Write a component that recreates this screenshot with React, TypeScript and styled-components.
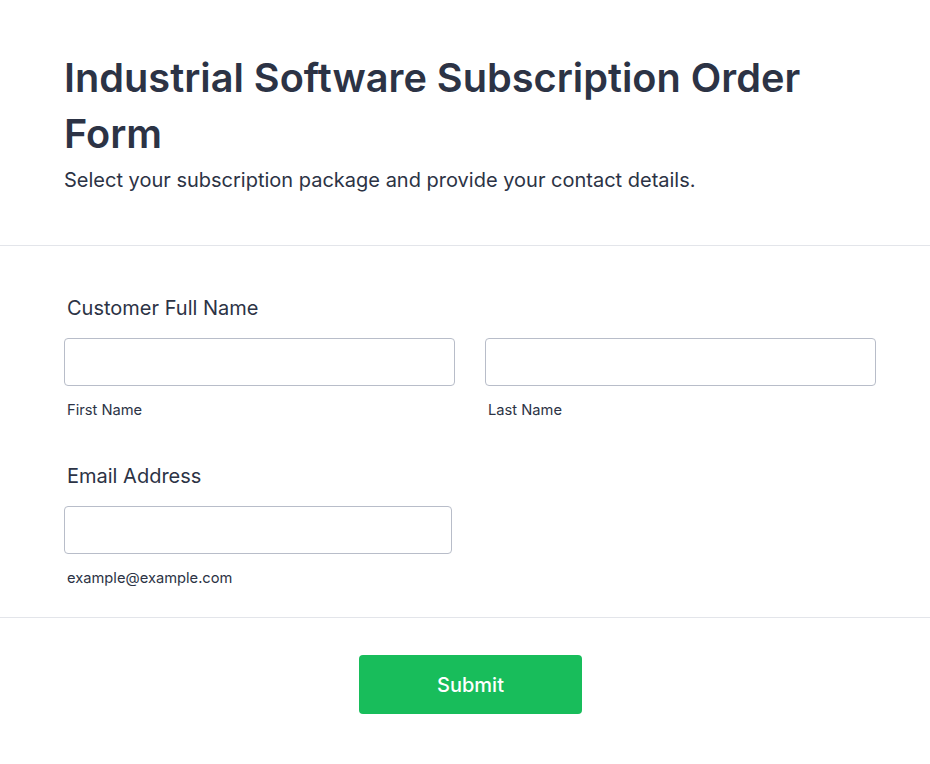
import React from "react";
import styled, { createGlobalStyle } from "styled-components";

const Global = createGlobalStyle`
  html, body { margin: 0; padding: 0; background: #fff; }
  body { font-family: Inter, "Noto Sans", sans-serif; color: #2c3345; }
  * { box-sizing: border-box; }
`;

const Page = styled.div`
  width: 930px;
  min-height: 764px;
  background: #fff;
`;

const Header = styled.header`
  padding: 50px 54px 51px 64px;
  border-bottom: 1px solid #e3e5ea;
`;

const Title = styled.h1`
  margin: 0;
  font-size: 39.7px;
  font-weight: 600;
  line-height: 56px;
  color: #2c3345;
`;

const Subtitle = styled.p`
  margin: 4px 0 0;
  font-size: 20px;
  line-height: 28px;
  color: #2c3345;
`;

const Body = styled.section`
  padding: 48px 54px 29px 64px;
  border-bottom: 1px solid #e3e5ea;
  display: flex;
  flex-direction: column;
  gap: 42px;
`;

const Field = styled.div`
  display: flex;
  flex-direction: column;
`;

const Label = styled.label`
  padding-left: 3px;
  font-size: 20px;
  font-weight: 400;
  line-height: 28px;
  margin-bottom: 16px;
`;

const Row = styled.div`
  display: grid;
  grid-template-columns: 391px 391px;
  column-gap: 30px;
`;

const Col = styled.div<{ $width?: number }>`
  display: flex;
  flex-direction: column;
  width: ${(p) => (p.$width ? `${p.$width}px` : "auto")};
`;

const Input = styled.input`
  height: 48px;
  width: 100%;
  border: 1px solid #b8bdc9;
  border-radius: 4px;
  background: #fff;
  padding: 0 12px;
  font-family: inherit;
  font-size: 16px;
  outline: none;
`;

const Sub = styled.span`
  padding-left: 3px;
  margin-top: 14px;
  font-size: 14.7px;
  line-height: 20px;
  color: #2c3345;
`;

const Footer = styled.div`
  display: flex;
  justify-content: center;
  padding: 37px 0 40px;
`;

const SubmitButton = styled.button`
  width: 223px;
  height: 59px;
  border: none;
  border-radius: 4px;
  background: #18bd5b;
  color: #fff;
  font-family: inherit;
  font-size: 20px;
  font-weight: 500;
  margin-left: 11px;
  cursor: pointer;
`;

export default function App() {
  return (
    <Page>
      <Global />
      <Header>
        <Title>Industrial Software Subscription Order Form</Title>
        <Subtitle>Select your subscription package and provide your contact details.</Subtitle>
      </Header>
      <Body>
        <Field>
          <Label>Customer Full Name</Label>
          <Row>
            <Col>
              <Input type="text" />
              <Sub>First Name</Sub>
            </Col>
            <Col>
              <Input type="text" />
              <Sub>Last Name</Sub>
            </Col>
          </Row>
        </Field>
        <Field>
          <Label>Email Address</Label>
          <Col $width={388}>
            <Input type="email" />
            <Sub>example@example.com</Sub>
          </Col>
        </Field>
      </Body>
      <Footer>
        <SubmitButton type="button">Submit</SubmitButton>
      </Footer>
    </Page>
  );
}
